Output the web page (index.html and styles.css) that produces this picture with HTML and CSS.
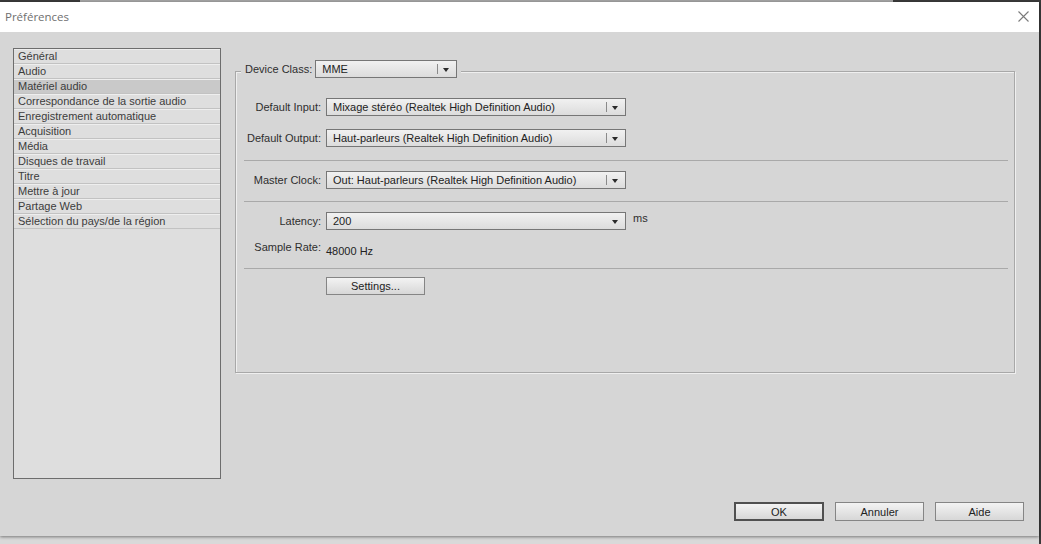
FILE: index.html
```html
<!DOCTYPE html>
<html lang="fr">
<head>
    <meta charset="UTF-8">
    <meta name="viewport" content="width=device-width, initial-scale=1.0">
    <title>Préférences</title>
    <link rel="stylesheet" href="styles.css">
</head>
<body>
    <div class="topstrip"></div>
    <div class="window">
        <div class="titlebar">
            <span class="title">Préférences</span>
            <svg class="close" width="11" height="11" viewBox="0 0 11 11">
                <path d="M0.5 0.5 L10.5 10.5 M10.5 0.5 L0.5 10.5" stroke="#7a7a7a" stroke-width="1.1" fill="none"/>
            </svg>
        </div>
        <div class="content">
            <div class="main">
                <ul class="nav">
                    <li>Général</li>
                    <li>Audio</li>
                    <li class="selected">Matériel audio</li>
                    <li>Correspondance de la sortie audio</li>
                    <li>Enregistrement automatique</li>
                    <li>Acquisition</li>
                    <li>Média</li>
                    <li>Disques de travail</li>
                    <li>Titre</li>
                    <li>Mettre à jour</li>
                    <li>Partage Web</li>
                    <li>Sélection du pays/de la région</li>
                </ul>

                <div class="group">
                    <div class="legend">
                        <span class="legend-label">Device Class:</span>
                        <div class="combo combo-small">
                            <span class="value">MME</span>
                            <span class="sep"></span>
                            <span class="arrow"></span>
                        </div>
                    </div>

                    <div class="row first">
                        <label>Default Input:</label>
                        <div class="combo">
                            <span class="value">Mixage stéréo (Realtek High Definition Audio)</span>
                            <span class="sep"></span>
                            <span class="arrow"></span>
                        </div>
                    </div>
                    <div class="row gap13">
                        <label>Default Output:</label>
                        <div class="combo">
                            <span class="value">Haut-parleurs (Realtek High Definition Audio)</span>
                            <span class="sep"></span>
                            <span class="arrow"></span>
                        </div>
                    </div>

                    <hr class="sep-line s1">

                    <div class="row gap10">
                        <label>Master Clock:</label>
                        <div class="combo">
                            <span class="value">Out: Haut-parleurs (Realtek High Definition Audio)</span>
                            <span class="sep"></span>
                            <span class="arrow"></span>
                        </div>
                    </div>

                    <hr class="sep-line s2">

                    <div class="row gap10">
                        <label>Latency:</label>
                        <div class="combo">
                            <span class="value">200</span>
                            <span class="arrow"></span>
                        </div>
                        <span class="unit">ms</span>
                    </div>
                    <div class="row gap8">
                        <label>Sample Rate:</label>
                        <span class="rate">48000 Hz</span>
                    </div>

                    <hr class="sep-line s2">

                    <div class="row gap8">
                        <button class="btn btn-settings">Settings...</button>
                    </div>
                </div>
            </div>

            <div class="footer">
                <button class="btn btn-default">OK</button>
                <button class="btn">Annuler</button>
                <button class="btn">Aide</button>
            </div>
        </div>
    </div>
</body>
</html>
```

FILE: styles.css
```css
html, body {
    margin: 0;
    padding: 0;
}
body {
    width: 1041px;
    height: 544px;
    overflow: hidden;
    font-family: "Liberation Sans", Arial, sans-serif;
    font-size: 11px;
    color: #2e2e2e;
    background: linear-gradient(to right, #d9d9d9 1039px, #3a3a3a 1039px);
}
.topstrip {
    height: 2px;
    background: linear-gradient(to right, #3a3a3a 80px, #a3a3a3 80px, #a3a3a3 893px, #3a3a3a 893px);
}
.window {
    width: 1039px;
    height: 534px;
    background: #d6d6d6;
    box-shadow: 0 1px 3px rgba(0, 0, 0, 0.45);
    display: flex;
    flex-direction: column;
}
.titlebar {
    height: 30px;
    background: #fff;
    display: flex;
    align-items: center;
    justify-content: space-between;
    padding: 0 10px 0 5px;
}
.title {
    font-family: "Open Sans", "Noto Sans", sans-serif;
    font-size: 11.5px;
    color: #6f6f6f;
    margin-top: -1px;
}
.close {
    display: block;
    margin-top: -1px;
}
.main {
    display: flex;
    padding: 16px 0 0 13px;
}
.nav {
    list-style: none;
    margin: 0;
    padding: 0;
    width: 208px;
    height: 431px;
    box-sizing: border-box;
    border: 1px solid #6d6d6d;
    background: #dedede;
}
.nav li {
    height: 13px;
    line-height: 13px;
    padding-left: 4px;
    border-top: 1px solid #eeeeee;
    border-bottom: 1px solid #c2c2c2;
    color: #3c3c3c;
    white-space: nowrap;
}
.nav li.selected {
    background: #c9c9c9;
}
.group {
    position: relative;
    margin: 23px 0 0 14px;
    width: 780px;
    height: 302px;
    box-sizing: border-box;
    border: 1px solid #a8a8a8;
    box-shadow: 1px 1px 0 #efefef, inset 1px 1px 0 #efefef;
    padding: 26px 6px 0 8px;
}
.legend {
    position: absolute;
    top: -12px;
    left: 5px;
    display: flex;
    align-items: center;
    padding: 0 4px;
    background: #d6d6d6;
    height: 18px;
}
.legend-label {
    margin-right: 3px;
}
.row {
    display: flex;
    align-items: center;
    height: 18px;
}
.gap13 { margin-top: 13px; }
.gap10 { margin-top: 10px; }
.gap8 { margin-top: 8px; }
.row label {
    width: 77px;
    margin-right: 5px;
    text-align: right;
    white-space: nowrap;
}
.combo {
    width: 300px;
    height: 18px;
    box-sizing: border-box;
    border: 1px solid #767676;
    background: linear-gradient(#f1f1f1, #dcdcdc);
    display: flex;
    align-items: center;
    color: #222;
}
.combo-small {
    width: 142px;
}
.combo .value {
    flex: 1;
    padding-left: 6px;
    white-space: nowrap;
    overflow: hidden;
}
.combo .sep {
    width: 1px;
    height: 10px;
    background: #8a8a8a;
}
.combo .arrow {
    width: 18px;
    height: 16px;
    position: relative;
}
.combo .arrow::after {
    content: "";
    position: absolute;
    left: 5px;
    top: 7px;
    border-left: 3.5px solid transparent;
    border-right: 3.5px solid transparent;
    border-top: 4px solid #2a2a2a;
}
.unit {
    align-self: flex-start;
    margin-left: 7px;
    margin-top: 0;
}
.rate {
    padding-top: 7px;
    color: #222;
}
.sep-line {
    border: 0;
    border-top: 1px solid #a9a9a9;
    height: 0;
    margin: 0;
}
.sep-line.s1 { margin-top: 13px; }
.sep-line.s2 { margin-top: 12px; }
.btn {
    font-family: "Liberation Sans", Arial, sans-serif;
    font-size: 11px;
    color: #222;
    height: 19px;
    width: 89px;
    padding: 0;
    box-sizing: border-box;
    border: 1px solid #858585;
    background: linear-gradient(#f3f3f3, #d7d7d7);
    border-radius: 0;
}
.btn-settings {
    margin-left: 82px;
    width: 99px;
    height: 18px;
}
.btn-default {
    width: 90px;
    border: 2px solid #505050;
}
.footer {
    display: flex;
    justify-content: flex-end;
    gap: 11px;
    margin-top: 23px;
    padding-right: 15px;
}
```
